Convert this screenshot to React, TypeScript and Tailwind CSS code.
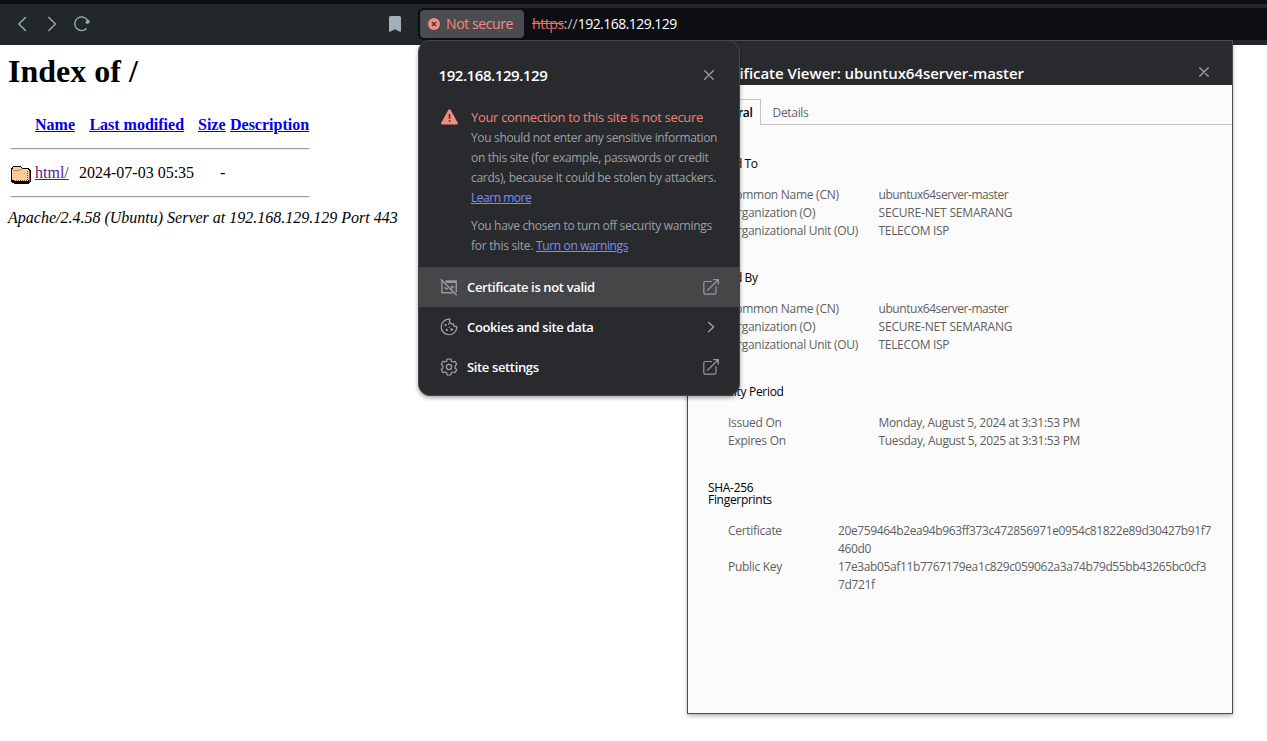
import React from "react";

function CloseIcon() {
  return (
    <svg width="10" height="10" viewBox="0 0 10 10" fill="none" stroke="#9da0a3" strokeWidth="1.3" strokeLinecap="round">
      <path d="M.7.7l8.6 8.6M9.3.7L.7 9.3" />
    </svg>
  );
}

function ExternalIcon() {
  return (
    <svg width="16" height="16" viewBox="0 0 16 16" fill="none" stroke="#96999c" strokeWidth="1.2" strokeLinecap="round" strokeLinejoin="round">
      <path d="M8.5 2.5H2.2a1.4 1.4 0 0 0-1.4 1.4v9.7A1.6 1.6 0 0 0 2.4 15.2h9a1.6 1.6 0 0 0 1.6-1.6V7.5" />
      <path d="M4.5 11.2L15.2.8M10.7.7h4.6v4.6" />
    </svg>
  );
}

function ChevronIcon() {
  return (
    <svg width="16" height="16" viewBox="0 0 16 16" fill="none" stroke="#a3a6a9" strokeWidth="1.3" strokeLinecap="round" strokeLinejoin="round">
      <path d="M5.5 3.3L10.6 8l-5.1 4.7" />
    </svg>
  );
}

function CertificateOffIcon() {
  return (
    <svg width="18" height="18" viewBox="0 0 18 18" fill="none" stroke="#96999c">
      <path d="M3.3 3.5H1.9v11.2h10.9M5.2 3.2h11.1v11" strokeWidth="1.4" />
      <path d="M6 3.8h10.3" strokeWidth="2.4" />
      <path d="M.8 1.2l15.9 15.9" strokeWidth="1.5" />
      <path d="M4.6 9.3l1.8 1.9 1.6-1.2M11.6 7.2l.4 1.4 1.5.4-1.5.5-.4 1.3-.8-1.3" strokeWidth="1.3" />
    </svg>
  );
}

function CookieIcon() {
  return (
    <svg width="18" height="18" viewBox="0 0 18 18" fill="none" stroke="#a3a6a9" strokeWidth="1.2" strokeLinejoin="round">
      <path d="M9.9 1.2A7.8 7.8 0 1 0 16.8 8.6a3.2 3.2 0 0 1-3.6-2.7A3.1 3.1 0 0 1 9.9 1.2z" />
      <g fill="#a3a6a9" stroke="none">
        <circle cx="5.6" cy="7" r="1.1" />
        <circle cx="8.8" cy="5.9" r=".8" />
        <circle cx="6.8" cy="11.9" r="1.1" />
        <circle cx="11.7" cy="11.5" r="1.3" />
        <circle cx="9.3" cy="9.2" r=".6" />
      </g>
    </svg>
  );
}

function GearIcon() {
  return (
    <svg width="18" height="18" viewBox="0 0 18 18" fill="none" stroke="#a3a6a9" strokeWidth="1.2" strokeLinejoin="round">
      <path d="M7.2 1h3.6l.5 2.2 1.4.8 2.2-.7 1.8 3.1-1.6 1.6v2l1.6 1.6-1.8 3.1-2.2-.7-1.4.8-.5 2.2H7.2l-.5-2.2-1.4-.8-2.2.7-1.8-3.1L2.9 10V8L1.3 6.4l1.8-3.1 2.2.7 1.4-.8z" />
      <circle cx="9" cy="9" r="2.6" />
    </svg>
  );
}

function FolderIcon() {
  return (
    <svg width="20" height="18" viewBox="0 0 20 18" shapeRendering="crispEdges">
      <path d="M2 0h8v1h1v1h7v1h1v1h1v12h-1v1h-1v1H3v-1H1v-1H0V2h1V1h1z" fill="#000" />
      <path d="M2 1h8v1h1v1h6v1h1v10h-1v1H3v-1H1V3h1z" fill="#ffcc99" />
      <path d="M2 4h7v1H2zM9 3h2v1H9z" fill="#c58a55" />
      <path d="M3 14.5h14M16.5 5v10" stroke="#7d542f" strokeWidth="1" strokeDasharray="1 1" fill="none" />
      <path d="M18 5h1v11h-1z" fill="#666" />
    </svg>
  );
}

function Toolbar() {
  return (
    <header className="flex h-[45px] shrink-0 border-t-4 border-[#0d0e13] bg-[#222729]">
      <div className="flex w-[418px] items-center pb-[1px]">
        <svg className="ml-[16px]" width="12" height="16" viewBox="0 0 12 16" fill="none" stroke="#9fb0b8" strokeWidth="1.3" strokeLinecap="round" strokeLinejoin="round">
          <path d="M9.5 1.5L2.8 8l6.7 6.5" />
        </svg>
        <svg className="ml-[18px]" width="12" height="16" viewBox="0 0 12 16" fill="none" stroke="#9fb0b8" strokeWidth="1.3" strokeLinecap="round" strokeLinejoin="round">
          <path d="M2.8 1.5L9.5 8l-6.7 6.5" />
        </svg>
        <svg className="ml-[16px]" width="16" height="16" viewBox="0 0 16 16" fill="none" stroke="#9fb0b8" strokeWidth="1.3" strokeLinecap="round">
          <path d="M12.3 12.7A6.8 6.8 0 1 1 13.4 4.2" />
          <circle cx="13.4" cy="6" r="1.7" fill="#9fb0b8" stroke="none" />
          <path d="M15 4.2v2.6h-2.8z" fill="#9fb0b8" strokeWidth=".8" />
        </svg>
        <svg className="ml-[299px]" width="12" height="16" viewBox="0 0 12 16" fill="#9fb0b8">
          <path d="M1.5 0h9a1.5 1.5 0 0 1 1.5 1.5V15.3a.6.6 0 0 1-1 .4L6 13.3 1 15.7a.6.6 0 0 1-1-.4V1.5A1.5 1.5 0 0 1 1.5 0z" />
        </svg>
      </div>
      <div className="mt-1 flex h-8 flex-1 items-center rounded-l-md bg-[#0d0e13] pl-0.5">
        <div className="flex h-7 w-[104px] items-center gap-[6px] rounded bg-[#4b4c50] pl-2">
          <svg width="12" height="12" viewBox="0 0 12 12">
            <circle cx="6" cy="6" r="6" fill="#f28b82" />
            <path d="M4 4l4 4M8 4L4 8" stroke="#4b3436" strokeWidth="1.4" />
          </svg>
          <span className="text-[14px] leading-7 tracking-[-0.4px] text-[#f28b82]">Not secure</span>
        </div>
        <div className="ml-2 flex text-[14px] leading-7 text-white">
          <span className="tracking-[-0.4px] text-[#f07068] line-through">https</span>
          <span className="tracking-[-0.02px] text-[#b5bdc2]">://</span>
          <span className="tracking-[-0.54px]">192.168.129.129</span>
        </div>
      </div>
    </header>
  );
}

function DirectoryIndex() {
  return (
    <main className="flex flex-col pl-2 pt-[8px] font-['Liberation_Serif',serif] text-[16px] leading-[18px] text-black">
      <h1 className="text-[32px] font-bold leading-[36px]">Index of /</h1>
      <div className="mt-[27px] flex pl-[27px] font-bold text-[#0000ee] underline">
        <a className="w-[54.4px]">Name</a>
        <a className="w-[108.6px] whitespace-nowrap">Last modified</a>
        <a className="w-[32px]">Size</a>
        <a>Description</a>
      </div>
      <div className="ml-[3px] mt-[14px] h-[2px] w-[298px] border-b border-t border-b-[#eeeeee] border-t-[#9a9a9a]" />
      <div className="ml-[3px] mt-[14px] flex h-[20px]">
        <div className="mt-[2px] w-[24px]"><FolderIcon /></div>
        <a className="w-[44px] text-[#551a8b] underline">html/</a>
        <span className="w-[141px]">2024-07-03 05:35</span>
        <span>-</span>
      </div>
      <div className="ml-[3px] mt-[12px] h-[2px] w-[298px] border-b border-t border-b-[#eeeeee] border-t-[#9a9a9a]" />
      <address className="mt-[11px] italic">Apache/2.4.58 (Ubuntu) Server at 192.168.129.129 Port 443</address>
    </main>
  );
}

function Row({ label, value, track }: { label: string; value: string; track: string }) {
  return (
    <div className="flex">
      <span className="w-[150.5px] tracking-[-0.27px]">{label}</span>
      <span className={track}>{value}</span>
    </div>
  );
}

function Identity({ title }: { title: string }) {
  return (
    <section className="mb-[32px]">
      <h3 className="mb-[16px] w-[49px] whitespace-nowrap leading-3 tracking-[-0.4px] text-black">{title}</h3>
      <div className="pl-5">
        <Row label="Common Name (CN)" value="ubuntux64server-master" track="tracking-[-0.44px]" />
        <Row label="Organization (O)" value="SECURE-NET SEMARANG" track="tracking-[-0.18px]" />
        <Row label="Organizational Unit (OU)" value="TELECOM ISP" track="tracking-[-0.31px]" />
      </div>
    </section>
  );
}

function CertificateViewer() {
  return (
    <div className="absolute left-[687px] top-[40px] flex h-[674px] w-[546px] flex-col border border-[#4a4b4d] bg-[#fbfbfb] shadow-[0_2px_4px_rgba(0,0,0,0.3)]">
      <div className="flex h-[44px] justify-between bg-[#292a2d]">
        <h2 className="mt-[22px] w-[336px] whitespace-nowrap text-right text-[15px] font-semibold leading-5 tracking-[-0.05px] text-white">Certificate Viewer: ubuntux64server-master</h2>
        <div className="mr-[23px] mt-[26px]"><CloseIcon /></div>
      </div>
      <div className="mt-[14px] flex h-[26px] text-[12px] leading-[26px]">
        <div className="w-[20px] border-b border-[#c3c3c3]" />
        <div className="w-[53px] border-l border-r border-t border-[#c3c3c3] pr-[10px] text-right font-semibold tracking-[-0.3px] text-black">General</div>
        <div className="flex-1 border-b border-[#c3c3c3] pl-[11.5px] pt-px tracking-[-0.31px] text-[#666]">Details</div>
      </div>
      <div className="px-5 pt-[33px] text-[12px] leading-[18px] text-[#5f5f5f]">
        <Identity title="Issued To" />
        <Identity title="Issued By" />
        <section className="mb-[32px]">
          <h3 className="mb-[16px] leading-3 tracking-[-0.3px] text-black">Validity Period</h3>
          <div className="pl-5">
            <Row label="Issued On" value="Monday, August 5, 2024 at 3:31:53 PM" track="tracking-[-0.32px]" />
            <Row label="Expires On" value="Tuesday, August 5, 2025 at 3:31:53 PM" track="tracking-[-0.34px]" />
          </div>
        </section>
        <section>
          <h3 className="mb-[16px] leading-3 tracking-[-0.3px] text-black">SHA-256<br />Fingerprints</h3>
          <div className="grid grid-cols-[110px_1fr] whitespace-nowrap pl-5">
            <span className="tracking-[-0.29px]">Certificate</span>
            <span className="tracking-[-0.38px]">20e759464b2ea94b963ff373c472856971e0954c81822e89d30427b91f7<br />460d0</span>
            <span className="tracking-[-0.29px]">Public Key</span>
            <span className="tracking-[-0.38px]">17e3ab05af11b7767179ea1c829c059062a3a74b79d55bb43265bc0cf3<br />7d721f</span>
          </div>
        </section>
      </div>
    </div>
  );
}

function MenuRow({ icon, label, end, active }: { icon: React.ReactNode; label: string; end: React.ReactNode; active?: boolean }) {
  return (
    <div className={`flex h-10 items-center pl-[21px] pr-5 ${active ? "bg-[#454648]" : ""}`}>
      <div className="w-[27px]">{icon}</div>
      <span className="flex-1 text-[13px] font-semibold leading-5 tracking-[-0.36px] text-white">{label}</span>
      {end}
    </div>
  );
}

function SiteInfoPopup() {
  return (
    <div className="absolute left-[418px] top-[40px] flex h-[356px] w-[322px] flex-col overflow-hidden rounded-xl border border-[#454648] bg-[#292a2d] shadow-[0_2px_4px_rgba(0,0,0,0.35)]">
      <div className="flex h-[66px] items-start justify-between pl-[19.5px] pr-[25px] pt-[24px]">
        <h2 className="text-[15px] font-semibold leading-5 tracking-[-0.43px] text-white">192.168.129.129</h2>
        <div className="mt-[5px]"><CloseIcon /></div>
      </div>
      <div className="flex h-[160px]">
        <div className="w-[52px] pl-[21.5px] pt-[2px]">
          <svg width="17" height="16" viewBox="0 0 17 16">
            <path d="M7.3 1a1.4 1.4 0 0 1 2.4 0l6.9 12.5A1.4 1.4 0 0 1 15.4 15.6H1.6A1.4 1.4 0 0 1 .4 13.5z" fill="#f28b82" />
            <path d="M7.7 5h1.7v4.7H7.7zM7.7 11h1.7v1.7H7.7z" fill="#4a3335" />
          </svg>
        </div>
        <div className="whitespace-nowrap text-[12px] leading-5 text-[#9aa0a6]">
          <div className="text-[13px] tracking-[-0.32px] text-[#f28076]">Your connection to this site is not secure</div>
          <p className="pt-px tracking-[-0.3px]">
            <span className="tracking-[-0.34px]">You should not enter any sensitive information</span><br />
            on this site (for example, passwords or credit<br />
            cards), because it could be stolen by attackers.<br />
            <a className="tracking-[-0.48px] text-[#7b8cff] underline">Learn more</a>
          </p>
          <p className="mt-2 tracking-[-0.32px]">
            You have chosen to turn off security warnings<br />
            <span className="tracking-[-0.25px]">for this site. </span><a className="tracking-[-0.37px] text-[#7b8cff] underline">Turn on warnings</a>
          </p>
        </div>
      </div>
      <MenuRow active icon={<CertificateOffIcon />} label="Certificate is not valid" end={<ExternalIcon />} />
      <MenuRow icon={<CookieIcon />} label="Cookies and site data" end={<ChevronIcon />} />
      <MenuRow icon={<GearIcon />} label="Site settings" end={<ExternalIcon />} />
    </div>
  );
}

export default function App() {
  return (
    <div className="relative flex h-[741px] w-[1267px] flex-col overflow-hidden bg-white font-['Open_Sans','Noto_Sans',sans-serif]">
      <Toolbar />
      <DirectoryIndex />
      <CertificateViewer />
      <SiteInfoPopup />
    </div>
  );
}
